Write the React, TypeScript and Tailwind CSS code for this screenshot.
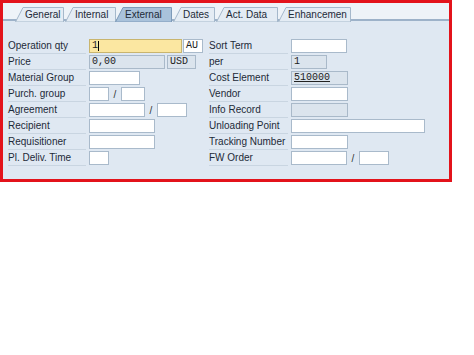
import React from "react";

const tabs = [
  { label: "General", x: 15, w: 49 },
  { label: "Internal", x: 65, w: 51 },
  { label: "External", x: 115, w: 57, active: true },
  { label: "Dates", x: 173, w: 42 },
  { label: "Act. Data", x: 216, w: 62 },
  { label: "Enhancemen", x: 278, w: 73 },
];

function Tab({ label, x, w, active }: { label: string; x: number; w: number; active?: boolean }) {
  return (
    <div className="absolute top-[4px] h-[15px]" style={{ left: x - 3, width: w }}>
      <svg className="absolute inset-0" width={w} height={15}>
        <polygon
          points={`0.5,15 8,0.5 ${w - 0.5},0.5 ${w - 0.5},15`}
          fill={active ? "#a9c2db" : "#e4ecf4"}
          stroke={active ? "#7e9bb9" : "#a5b8cb"}
        />
      </svg>
      <span className="absolute left-[10px] top-[1px] text-[10px] leading-[13px] text-[#1d2a38]">{label}</span>
    </div>
  );
}

function Field({ w, gray, yellow, children }: { w: number; gray?: boolean; yellow?: boolean; children?: React.ReactNode }) {
  const bg = yellow ? "bg-[#fbe7a1] border-[#c9b56e]" : gray ? "bg-[#dbe4ed] border-[#a9b9c9]" : "bg-white border-[#a9bacb]";
  return (
    <div
      className={`h-[14px] border ${bg} px-[2px] font-['Liberation_Mono',monospace] text-[10px] leading-[12px] text-[#222] flex items-center`}
      style={{ width: w }}
    >
      {children}
    </div>
  );
}

function Label({ text, w }: { text: string; w: number }) {
  return (
    <div className="h-[15px] border-b border-[#c9d5e1] text-[10px] leading-[14px] text-[#1d2a38] mr-[3px]" style={{ width: w }}>
      {text}
    </div>
  );
}

const Slash = ({ w }: { w: number }) => (
  <div className="text-[10px] text-[#333] text-center" style={{ width: w }}>/</div>
);

export default function App() {
  const left: [string, React.ReactNode][] = [
    [
      "Operation qty",
      <>
        <Field w={93} yellow>
          1<span className="inline-block w-px h-[10px] bg-black" />
        </Field>
        <div className="w-[1px]" />
        <Field w={20}>AU</Field>
      </>,
    ],
    [
      "Price",
      <>
        <Field w={76} gray>0,00</Field>
        <div className="w-[2px]" />
        <Field w={29} gray>USD</Field>
      </>,
    ],
    ["Material Group", <Field w={51} />],
    [
      "Purch. group",
      <>
        <Field w={20} />
        <Slash w={12} />
        <Field w={24} />
      </>,
    ],
    [
      "Agreement",
      <>
        <Field w={56} />
        <Slash w={12} />
        <Field w={30} />
      </>,
    ],
    ["Recipient", <Field w={66} />],
    ["Requisitioner", <Field w={66} />],
    ["Pl. Deliv. Time", <Field w={20} />],
  ];

  const right: [string, React.ReactNode][] = [
    ["Sort Term", <Field w={56} />],
    ["per", <Field w={36} gray>1</Field>],
    ["Cost Element", <Field w={57} gray><span className="underline">510000</span></Field>],
    ["Vendor", <Field w={57} />],
    ["Info Record", <Field w={57} gray />],
    ["Unloading Point", <Field w={134} />],
    ["Tracking Number", <Field w={57} />],
    [
      "FW Order",
      <>
        <Field w={56} />
        <Slash w={12} />
        <Field w={30} />
      </>,
    ],
  ];

  return (
    <div className="w-[474px] h-[355px] bg-white font-['Liberation_Sans',Arial,sans-serif]">
      <div className="w-[452px] h-[182px] border-[3px] border-[#e3131b] flex flex-col">
        <div className="relative h-[18px] bg-[#eef3f8] border-b-2 border-[#9db2c9]">
          {tabs.map((t) => (
            <Tab key={t.label} {...t} />
          ))}
        </div>
        <div className="flex-1 bg-[#dfe8f2] pt-[18px] pl-[5px] flex">
          <div className="w-[201px] flex flex-col gap-[2px]">
            {left.map(([l, f]) => (
              <div key={l} className="flex items-center h-[14px]">
                <Label text={l} w={78} />
                {f}
              </div>
            ))}
          </div>
          <div className="flex flex-col gap-[2px]">
            {right.map(([l, f]) => (
              <div key={l} className="flex items-center h-[14px]">
                <Label text={l} w={79} />
                {f}
              </div>
            ))}
          </div>
        </div>
      </div>
    </div>
  );
}
